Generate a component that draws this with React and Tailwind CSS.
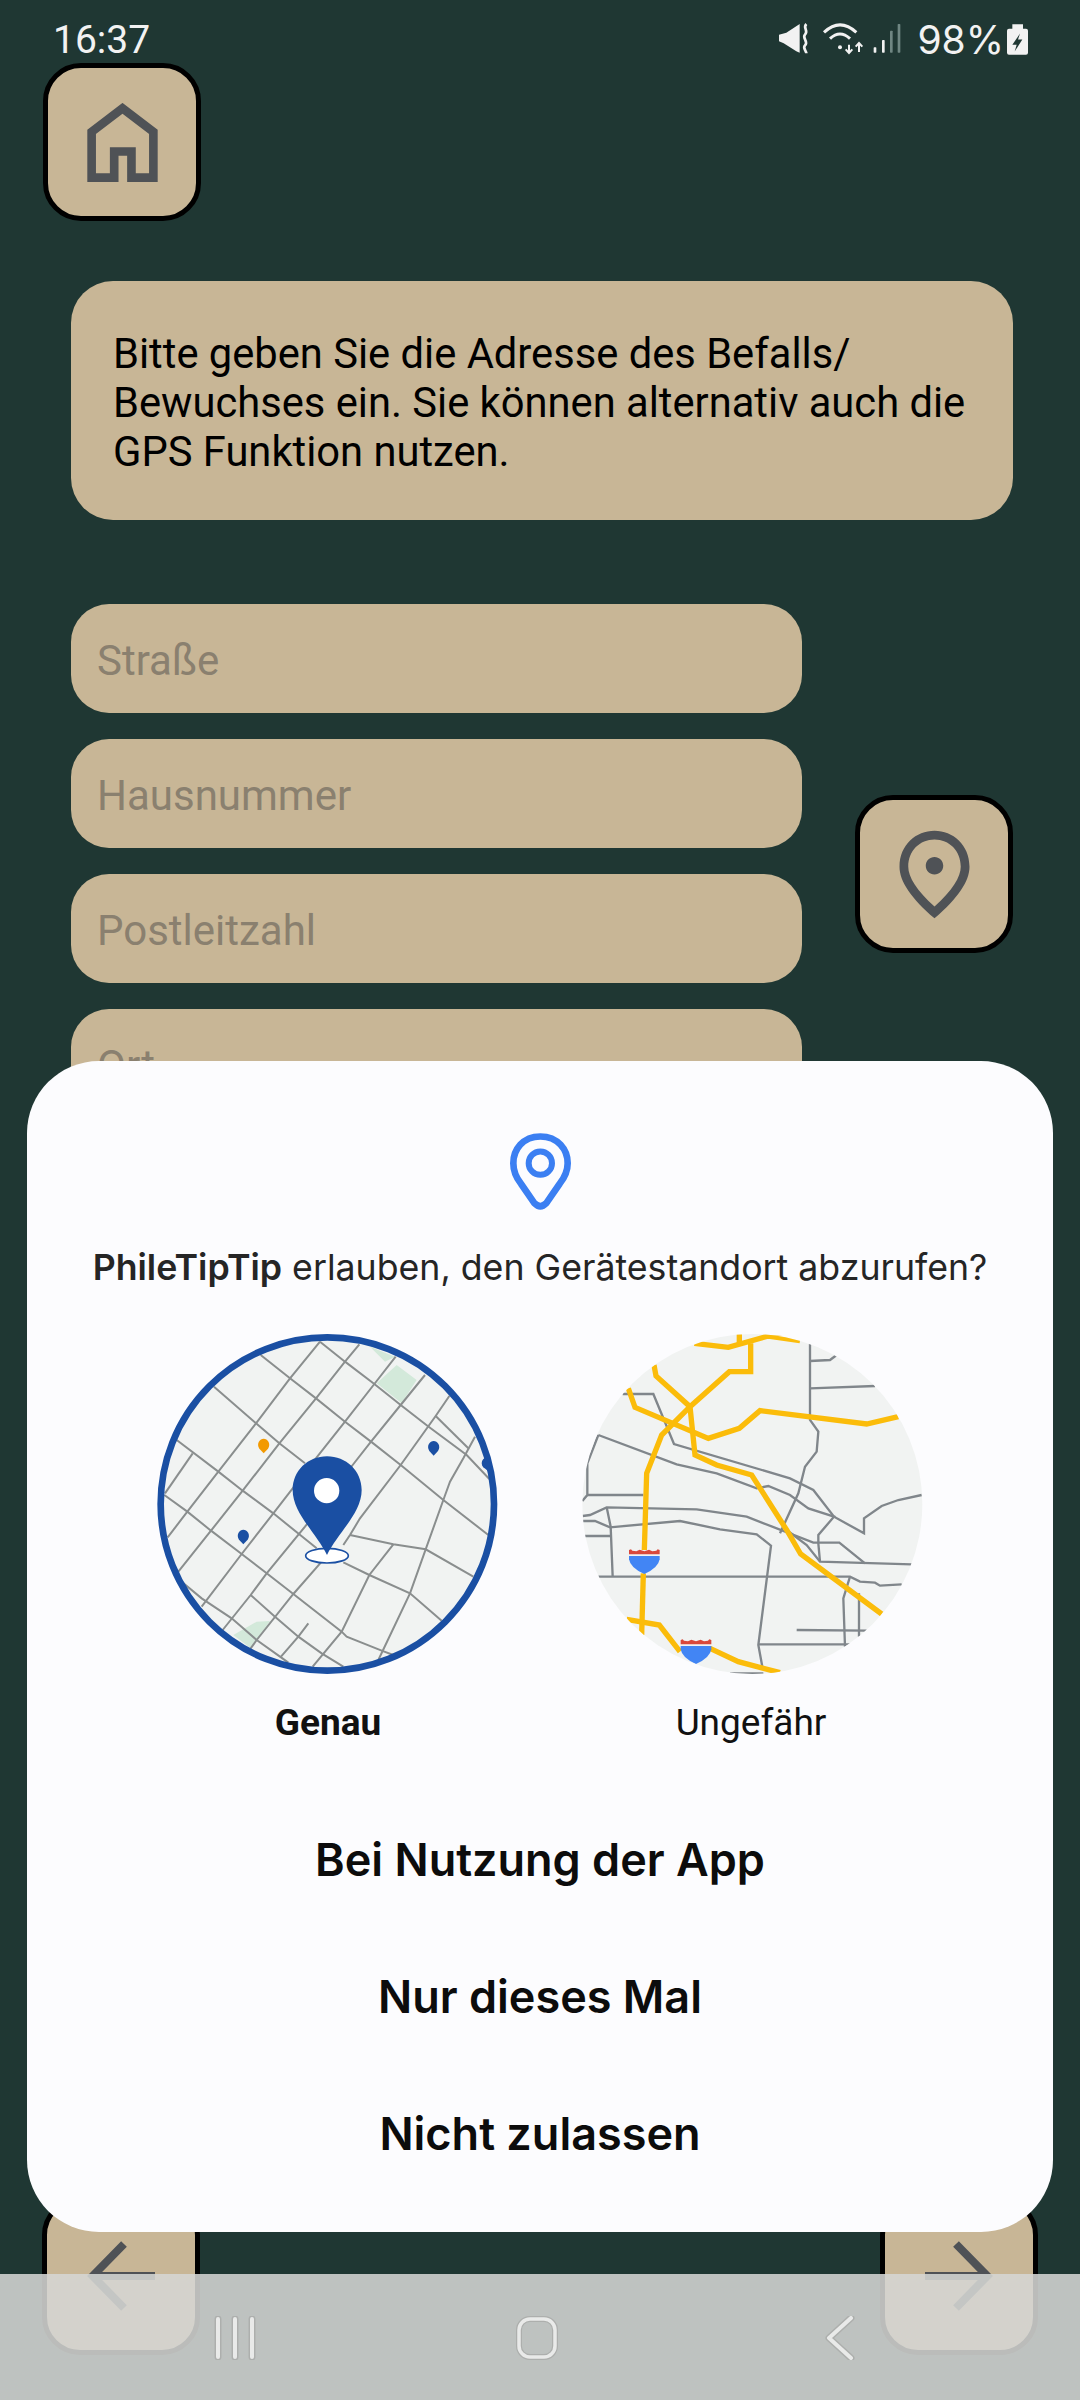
const roboto = { fontFamily: "Roboto, sans-serif" };

const preciseRoads = [
  "570,125 480,235 378,370 265,515 172,635 113,712",
  "688,133 645,185 558,295 448,430 338,572 243,692 145,815",
  "797,170 733,252 645,365 560,472 430,640 335,762 215,920",
  "885,225 812,315 723,425 668,495 525,680 410,820 362,885 278,990",
  "958,288 917,348 812,495 690,655 660,705 640,735",
  "575,785 490,882 380,1020 362,1045",
  "392,165 480,235 558,295 645,365 723,425 812,495 940,600 1075,705",
  "252,260 378,370 448,430 525,490",
  "570,125 645,185 733,252 812,315 893,378 1010,465 1078,537",
  "140,420 265,515 338,572 430,640 560,745",
  "103,585 172,635 243,692 335,762 410,820 490,882 635,995 650,1010 755,1052 790,1065",
  "155,845 215,895 305,955 380,1020 450,1070 475,1088",
  "362,885 435,950 505,1010 575,1060 640,1100",
  "917,348 1015,445",
  "105,580 188,460",
  "660,705 790,733 887,748 1030,830",
  "640,787 718,825 840,880 935,962",
  "790,733 718,825 635,995 548,1100",
  "1035,410 1000,475 960,545 940,600 887,748 840,880 745,1080",
  "535,970 505,1010 453,1070",
];

const grayRoads = [
  "750,130 750,360 775,395 770,455 735,500 715,580 660,700",
  "750,183 810,180 830,165",
  "750,265 945,258",
  "188,282 280,282 342,432 690,535 760,570 822,650 912,700 912,655 965,618 1015,600 1085,585",
  "115,405 350,493 470,520 590,565 625,558 690,585 745,625 822,650 775,705 775,730 780,785",
  "115,405 82,490 82,585 67,603",
  "82,585 250,585",
  "68,648 90,645 140,622 410,628 560,650 760,728 838,728 915,790",
  "680,690 740,735 780,785 1055,793",
  "140,622 152,680 158,830",
  "68,663 105,663 150,682 360,663 480,688 590,703 633,737 595,1035 607,1100",
  "75,708 152,708",
  "115,830 870,830 900,845 945,848 960,857 1025,853",
  "870,830 850,895 855,1040",
  "897,880 897,1010",
  "710,990 920,992",
  "595,1033 870,1033",
  "510,1120 610,1120",
];

const yellowRoads = [
  "403,130 505,142 625,108 720,122",
  "538,102 538,130",
  "572,130 572,215 508,215 390,320 305,405 260,520 253,750",
  "282,195 288,228 390,320 405,465 470,495 575,525 680,690 722,762 965,942",
  "205,265 225,322 445,415 538,385 600,332 920,372 1015,350",
  "250,820 245,1005",
  "200,958 298,975 360,1055",
  "450,1045 535,1085 660,1118",
];

function StatusIcons() {
  return (
    <svg width="135" height="50" viewBox="0 0 405 150" className="shrink-0">
      <path d="M30 62 L52 56 L92 30 V116 L82 112 L44 88 L30 82 Z" fill="#f2f2f2" />
      <path d="M112 30 C100 42 120 50 108 62 C98 72 120 82 108 94 C100 102 112 110 112 118" fill="none" stroke="#f2f2f2" strokeWidth="8" />
      <path d="M165 55 Q213 10 262 55 M183 74 Q213 46 243 74" fill="none" stroke="#f2f2f2" strokeWidth="9" />
      <circle cx="213" cy="100" r="6" fill="#f2f2f2" />
      <path d="M240 92 V116 M230 106 L240 117 L250 106 M270 114 V88 M260 98 L270 87 L280 98" fill="none" stroke="#f2f2f2" strokeWidth="6" />
      <rect x="314" y="100" width="8" height="16" rx="2" fill="#f2f2f2" />
      <rect x="339" y="78" width="8" height="38" rx="2" fill="#f2f2f2" />
      <rect x="363" y="50" width="8" height="66" rx="2" fill="#6f8682" />
      <rect x="386" y="30" width="8" height="86" rx="2" fill="#6f8682" />
    </svg>
  );
}

function Battery() {
  return (
    <svg width="21" height="31" viewBox="0 0 63 92" className="shrink-0">
      <path d="M16 0 H48 V14 H57 Q63 14 63 20 V86 Q63 92 57 92 H6 Q0 92 0 86 V20 Q0 14 6 14 H16 Z" fill="#f2f2f2" />
      <path d="M39 28 L16 62 L29 62 L23 82 L46 46 L33 46 Z" fill="#1f3733" />
    </svg>
  );
}

function SquareButton({ children }) {
  return (
    <div className="w-[158px] h-[158px] shrink-0 flex items-center justify-center rounded-[38px] border-[5px] border-black bg-[#c8b696]">
      {children}
    </div>
  );
}

function Arrow({ flip }) {
  return (
    <svg width="76" height="72" viewBox="0 0 76 72" className={flip ? "-scale-x-100" : ""}>
      <path d="M72 36 H10 M41 4 L9.66 36 L41 68" fill="none" stroke="#4f5256" strokeWidth="8" />
    </svg>
  );
}

function Field({ label }) {
  return (
    <div className="h-[109px] rounded-[38px] bg-[#c8b696] pl-[26px] pt-[4px] flex items-center text-[42px] text-[#8a806f]">
      {label}
    </div>
  );
}

function PreciseMap() {
  return (
    <svg width="390" height="400" viewBox="0 0 1170 1200" className="shrink-0">
      <defs>
        <clipPath id="preciseClip">
          <circle cx="592" cy="612" r="500" />
        </clipPath>
      </defs>
      <g clipPath="url(#preciseClip)">
        <rect width="1170" height="1200" fill="#f1f3f2" />
        <path d="M740 250 L800 195 L860 240 L815 310 Z M720 140 L795 170 L765 185 Z M310 1005 L380 965 L420 963 L362 1045 Z" fill="#d3e9da" />
        {preciseRoads.map((pts) => (
          <polyline key={pts} points={pts} fill="none" stroke="#8a8e8e" strokeWidth="6" />
        ))}
        <path d="M1072 470 C1056 474 1050 490 1060 502 L1078 516 L1095 490 Z" fill="#1a4fa3" />
      </g>
      <circle cx="592" cy="612" r="500" fill="none" stroke="#1a4fa3" strokeWidth="20" />
      <path d="M401 460 L388 446 C378 430 390 416 401 416 C412 416 424 430 414 446 Z" fill="#f29900" />
      <path d="M911 467 L898 453 C888 437 900 423 911 423 C922 423 934 437 924 453 Z" fill="#1a4fa3" />
      <path d="M340 733 L327 719 C317 703 329 689 340 689 C351 689 363 703 353 719 Z" fill="#1a4fa3" />
      <ellipse cx="591" cy="767" rx="64" ry="22" fill="#fff" stroke="#1a4fa3" strokeWidth="5" />
      <path d="M591 765 C560 700 488 640 488 570 C488 512 534 469 591 469 C648 469 695 512 695 570 C695 640 622 700 591 765 Z" fill="#1a4fa3" />
      <circle cx="590" cy="572" r="38" fill="#fff" />
    </svg>
  );
}

function Shield({ x, y }) {
  return (
    <g transform={`translate(${x} ${y})`}>
      <path d="M-46 2 L-40 0 L-36 4 L-24 6 L-14 1 L0 6 L14 1 L24 6 L36 4 L40 0 L46 2 V15 H-46 Z" fill="#d9483b" />
      <path d="M-46 20 H46 V30 Q42 56 0 74 Q-42 56 -46 30 Z" fill="#4285f4" />
    </g>
  );
}

function ApproxMap() {
  return (
    <svg width="390" height="400" viewBox="0 0 1170 1200" className="shrink-0">
      <defs>
        <clipPath id="approxClip">
          <circle cx="577" cy="612" r="510" />
        </clipPath>
      </defs>
      <g clipPath="url(#approxClip)">
        <rect width="1170" height="1200" fill="#f1f3f2" />
        {grayRoads.map((pts) => (
          <polyline key={pts} points={pts} fill="none" stroke="#80868b" strokeWidth="7" />
        ))}
        {yellowRoads.map((pts) => (
          <polyline key={pts} points={pts} fill="none" stroke="#fbbc0a" strokeWidth="16" />
        ))}
        <Shield x={253} y={748} />
        <Shield x={408} y={1018} />
      </g>
    </svg>
  );
}

function NavIcons() {
  return (
    <div className="flex justify-between pl-[214px] pr-[224px] pt-[42px]">
      <svg width="42" height="44" viewBox="0 0 42 44">
        <path d="M4 3 V41 M21 3 V41 M38 3 V41" stroke="#adafad" strokeWidth="7" strokeLinecap="round" />
        <path d="M4 3 V41 M21 3 V41 M38 3 V41" stroke="#e9eae9" strokeWidth="4" strokeLinecap="round" />
      </svg>
      <svg width="42" height="44" viewBox="0 0 42 44">
        <rect x="3" y="3" width="36" height="38" rx="11" fill="none" stroke="#adafad" strokeWidth="6" />
        <rect x="3" y="3" width="36" height="38" rx="11" fill="none" stroke="#e9eae9" strokeWidth="3.5" />
      </svg>
      <svg width="38" height="44" viewBox="0 0 38 44">
        <path d="M33 2 L11 22 L33 42" fill="none" stroke="#adafad" strokeWidth="7" strokeLinecap="round" strokeLinejoin="round" />
        <path d="M33 2 L11 22 L33 42" fill="none" stroke="#e9eae9" strokeWidth="4" strokeLinecap="round" strokeLinejoin="round" />
      </svg>
    </div>
  );
}

export default function App() {
  return (
    <div className="relative w-[1080px] h-[2400px] overflow-hidden bg-[#1f3733] flex flex-col" style={roboto}>
      {/* Status bar */}
      <div className="mt-[15px] h-[48px] flex items-center pl-[53px] pr-[52px] text-[#f2f2f2]">
        <span className="pt-[2px] text-[39px] leading-none">16:37</span>
        <div className="ml-auto flex items-center">
          <StatusIcons />
          <span className="ml-[13px] mr-[3px] text-[39px] leading-none" style={{ fontFamily: "Inter, sans-serif" }}>98%</span>
          <Battery />
        </div>
      </div>

      <div className="ml-[43px]">
        <SquareButton>
          <svg width="71" height="79" viewBox="170 157 212 238">
            <path d="M251 382 H183 V244 L276 173 L369 244 V382 H303 V303 H251 Z" fill="none" stroke="#4f5256" strokeWidth="26" />
          </svg>
        </SquareButton>
      </div>

      <div className="mt-[60px] ml-[71px] w-[942px] h-[239px] rounded-[42px] bg-[#c8b696] pl-[42px] pr-[10px] pt-[3px] flex items-center text-[41.7px] leading-[49px] text-black">
        <p>
          Bitte geben Sie die Adresse des Befalls/
          <br />
          Bewuchses ein. Sie können alternativ auch die
          <br />
          GPS Funktion nutzen.
        </p>
      </div>

      <div className="mt-[84px] ml-[71px] flex items-start">
        <div className="w-[731px] flex flex-col gap-[26px]">
          <Field label="Straße" />
          <Field label="Hausnummer" />
          <Field label="Postleitzahl" />
          <Field label="Ort" />
        </div>
        <div className="ml-[53px] mt-[191px]">
          <SquareButton>
            <svg width="105" height="105" viewBox="0 0 24 24" fill="#4f5256">
              <path d="M12 12c-1.1 0-2-.9-2-2s.9-2 2-2 2 .9 2 2-.9 2-2 2zm6-1.8C18 6.57 15.35 4 12 4s-6 2.57-6 6.2c0 2.34 1.95 5.44 6 9.14 4.05-3.7 6-6.8 6-9.14zM12 2c4.2 0 8 3.22 8 8.2 0 3.32-2.67 7.25-8 11.8-5.33-4.55-8-8.48-8-11.8C4 5.22 7.8 2 12 2z" />
            </svg>
          </SquareButton>
        </div>
      </div>

      {/* Bottom navigation buttons */}
      <div className="mt-auto mb-[45px] px-[42px] flex justify-between">
        <SquareButton>
          <Arrow />
        </SquareButton>
        <SquareButton>
          <Arrow flip />
        </SquareButton>
      </div>

      {/* System navigation bar */}
      <div className="absolute left-0 right-0 top-[2274px] h-[126px] bg-[rgba(213,214,212,0.88)]">
        <NavIcons />
      </div>

      {/* Permission dialog */}
      <div className="absolute left-[27px] top-[1061px] w-[1026px] h-[1171px] rounded-[72px] bg-[#fcfcfe] flex flex-col" style={{ fontFamily: "Inter, sans-serif" }}>
        <div className="pt-[72px] flex justify-center">
          <svg width="61" height="77" viewBox="117 40 183 230">
            <path d="M208 50 C155 50 127 90 127 130 C127 150 133 170 150 192 L190 250 Q208 268 226 250 L266 192 C283 170 290 150 290 130 C290 90 261 50 208 50 Z" fill="none" stroke="#3b7ff2" strokeWidth="20" />
            <circle cx="208" cy="130" r="35" fill="none" stroke="#3b7ff2" strokeWidth="18" />
          </svg>
        </div>
        <p className="mt-[35px] text-center text-[35.7px] leading-[44px] text-[#252525]">
          <span className="font-semibold">PhileTipTip</span> erlauben, den Gerätestandort abzurufen?
        </p>
        <div className="mt-[11px] pl-[103px] flex gap-[40px]">
          <div className="w-[390px] flex flex-col items-center">
            <PreciseMap />
            <span className="mt-[1px] ml-[6px] text-[37px] leading-[44px] font-bold text-[#111]" style={roboto}>Genau</span>
          </div>
          <div className="w-[390px] flex flex-col items-center">
            <ApproxMap />
            <span className="mt-[1px] mr-[8px] text-[37px] leading-[44px] text-[#111]" style={roboto}>Ungefähr</span>
          </div>
        </div>
        <div className="mt-[46px] flex flex-col text-[45px] font-semibold text-[#0c0c0c] text-center">
          <div className="h-[137px] flex items-center justify-center">Bei Nutzung der App</div>
          <div className="h-[137px] flex items-center justify-center">Nur dieses Mal</div>
          <div className="h-[137px] flex items-center justify-center">Nicht zulassen</div>
        </div>
      </div>
    </div>
  );
}
